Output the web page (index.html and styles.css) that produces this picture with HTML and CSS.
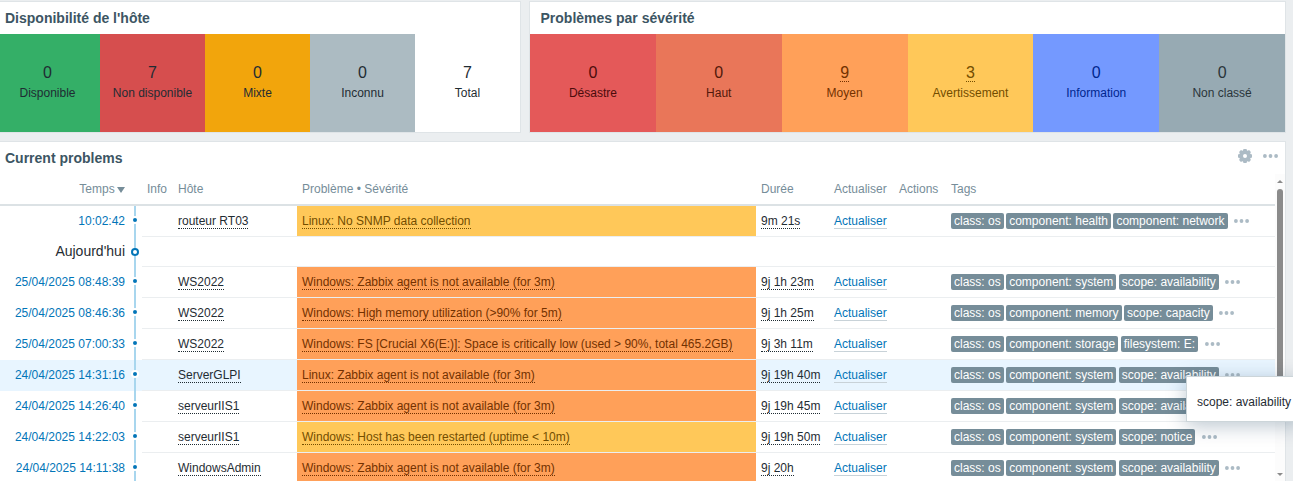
FILE: index.html
```html
<!DOCTYPE html>
<html lang="fr">
<head>
<meta charset="utf-8">
<title>Zabbix</title>
<link rel="stylesheet" href="styles.css">
</head>
<body>
<svg class="defs" aria-hidden="true">
  <symbol id="more" viewBox="0 0 15 4"><circle cx="1.9" cy="2" r="1.9"/><circle cx="7.5" cy="2" r="1.9"/><circle cx="13.1" cy="2" r="1.9"/></symbol>
</svg>
<main class="dashboard">
  <div class="top">
    <section class="widget">
      <h4 class="title">Disponibilité de l'hôte</h4>
      <div class="tiles hosts">
        <div class="tile available"><span class="count">0</span><span>Disponible</span></div>
        <div class="tile unavailable"><span class="count">7</span><span>Non disponible</span></div>
        <div class="tile mixed"><span class="count">0</span><span>Mixte</span></div>
        <div class="tile unknown"><span class="count">0</span><span>Inconnu</span></div>
        <div class="tile"><span class="count">7</span><span>Total</span></div>
      </div>
    </section>
    <section class="widget severity">
      <h4 class="title">Problèmes par sévérité</h4>
      <div class="tiles">
        <div class="tile disaster"><span class="count">0</span><span>Désastre</span></div>
        <div class="tile high"><span class="count">0</span><span>Haut</span></div>
        <div class="tile average"><span class="count"><a class="hint">9</a></span><span>Moyen</span></div>
        <div class="tile warning"><span class="count"><a class="hint">3</a></span><span>Avertissement</span></div>
        <div class="tile information"><span class="count">0</span><span>Information</span></div>
        <div class="tile unclassified"><span class="count">0</span><span>Non classé</span></div>
      </div>
    </section>
  </div>
  <section class="widget problems">
    <header class="bar">
      <h4 class="title">Current problems</h4>
      <svg class="gear" viewBox="0 0 14 14"><path fill-rule="evenodd" d="M5.500 0h3l.5 1.500.6.300 1.500-.7 1.800 1.800-.7 1.500.3.600 1.500.5v3l-1.500.5-.3.600.7 1.500-1.800 1.800-1.500-.7-.6.300-.5 1.500h-3l-.5-1.500-.6-.3-1.500.7-1.800-1.800.7-1.500-.3-.6L0 8.500v-3L1.500 5l.3-.6-.7-1.500 1.800-1.800 1.500.7.600-.3zM7 5a2 2 0 1 0 0 4 2 2 0 0 0 0-4z"/></svg>
      <svg class="more"><use href="#more"/></svg>
    </header>
    <div class="body">
      <div class="table">
        <div class="row head">
          <span class="time">Temps <i class="sort"></i></span><span>Info</span><span>Hôte</span><span>Problème • Sévérité</span><span>Durée</span><span>Actualiser</span><span>Actions</span><span>Tags</span>
        </div>
        <div class="row">
          <div class="time">10:02:42</div><div></div><div><a class="hint">routeur RT03</a></div><div class="warning"><a class="hint">Linux: No SNMP data collection</a></div><div><a class="hint">9m 21s</a></div><div><a class="update">Actualiser</a></div><div></div>
          <div class="tags"><span class="tag">class: os</span><span class="tag">component: health</span><span class="tag">component: network</span><svg class="more"><use href="#more"/></svg></div>
        </div>
        <div class="row today"><div class="time">Aujourd'hui</div><div class="rest"></div></div>
        <div class="row">
          <div class="time">25/04/2025 08:48:39</div><div></div><div><a class="hint">WS2022</a></div><div class="average"><a class="hint">Windows: Zabbix agent is not available (for 3m)</a></div><div><a class="hint">9j 1h 23m</a></div><div><a class="update">Actualiser</a></div><div></div>
          <div class="tags"><span class="tag">class: os</span><span class="tag">component: system</span><span class="tag">scope: availability</span><svg class="more"><use href="#more"/></svg></div>
        </div>
        <div class="row">
          <div class="time">25/04/2025 08:46:36</div><div></div><div><a class="hint">WS2022</a></div><div class="average"><a class="hint">Windows: High memory utilization (&gt;90% for 5m)</a></div><div><a class="hint">9j 1h 25m</a></div><div><a class="update">Actualiser</a></div><div></div>
          <div class="tags"><span class="tag">class: os</span><span class="tag">component: memory</span><span class="tag">scope: capacity</span><svg class="more"><use href="#more"/></svg></div>
        </div>
        <div class="row">
          <div class="time">25/04/2025 07:00:33</div><div></div><div><a class="hint">WS2022</a></div><div class="average"><a class="hint">Windows: FS [Crucial X6(E:)]: Space is critically low (used &gt; 90%, total 465.2GB)</a></div><div><a class="hint">9j 3h 11m</a></div><div><a class="update">Actualiser</a></div><div></div>
          <div class="tags"><span class="tag">class: os</span><span class="tag">component: storage</span><span class="tag">filesystem: E:</span><svg class="more"><use href="#more"/></svg></div>
        </div>
        <div class="row hovered">
          <div class="time">24/04/2025 14:31:16</div><div></div><div><a class="hint">ServerGLPI</a></div><div class="average"><a class="hint">Linux: Zabbix agent is not available (for 3m)</a></div><div><a class="hint">9j 19h 40m</a></div><div><a class="update">Actualiser</a></div><div></div>
          <div class="tags"><span class="tag">class: os</span><span class="tag">component: system</span><span class="tag">scope: availability</span><svg class="more"><use href="#more"/></svg></div>
        </div>
        <div class="row">
          <div class="time">24/04/2025 14:26:40</div><div></div><div><a class="hint">serveurIIS1</a></div><div class="average"><a class="hint">Windows: Zabbix agent is not available (for 3m)</a></div><div><a class="hint">9j 19h 45m</a></div><div><a class="update">Actualiser</a></div><div></div>
          <div class="tags"><span class="tag">class: os</span><span class="tag">component: system</span><span class="tag">scope: availability</span><svg class="more"><use href="#more"/></svg></div>
        </div>
        <div class="row">
          <div class="time">24/04/2025 14:22:03</div><div></div><div><a class="hint">serveurIIS1</a></div><div class="warning"><a class="hint">Windows: Host has been restarted (uptime &lt; 10m)</a></div><div><a class="hint">9j 19h 50m</a></div><div><a class="update">Actualiser</a></div><div></div>
          <div class="tags"><span class="tag">class: os</span><span class="tag">component: system</span><span class="tag">scope: notice</span><svg class="more"><use href="#more"/></svg></div>
        </div>
        <div class="row">
          <div class="time">24/04/2025 14:11:38</div><div></div><div><a class="hint">WindowsAdmin</a></div><div class="average"><a class="hint">Windows: Zabbix agent is not available (for 3m)</a></div><div><a class="hint">9j 20h</a></div><div><a class="update">Actualiser</a></div><div></div>
          <div class="tags"><span class="tag">class: os</span><span class="tag">component: system</span><span class="tag">scope: availability</span><svg class="more"><use href="#more"/></svg></div>
        </div>
      </div>
      <div class="scrollbar"><i class="up"></i><i class="thumb"></i><i class="down"></i></div>
    </div>
  </section>
</main>
<div class="tooltip">scope: availability</div>
</body>
</html>
```

FILE: styles.css
```css
*, *::after { box-sizing: border-box; }
body {
  margin: 0;
  height: 481px;
  overflow: hidden;
  background: #ebeef0;
  color: #1f2c33;
  font: 12px/14px "Liberation Sans", Arial, sans-serif;
}
.defs { display: none; }
.dashboard {
  display: flex;
  flex-direction: column;
  gap: 8px;
  width: 1292px;
  margin: 1px 0 0 -6px;
}
.top { display: grid; grid-template-columns: 527px 757px; gap: 8px; }
.widget { background: #fff; border: 1px solid #dfe4e7; }
.title {
  margin: 0;
  height: 32px;
  padding: 0 10px;
  color: #3c5563;
  font-size: 14px;
  line-height: 32px;
}
.severity .title { padding-left: 10.5px; }

/* Count tiles */
.tiles { display: grid; grid-template-columns: repeat(6, 1fr); height: 98px; }
.hosts { grid-template-columns: repeat(5, 1fr); }
.tile {
  display: flex;
  flex-direction: column;
  align-items: center;
  gap: 4px;
  padding-top: 30px;
}
.count { height: 18px; font-size: 16px; line-height: 18px; }
.count .hint { display: inline-block; height: 18px; }
.available { background: #34af67; }
.unavailable { background: #d64e4e; }
.mixed { background: #f2a50c; }
.unknown { background: #acbbc2; }
.disaster { background: #e45959; color: #4b0c0c; }
.high { background: #e97659; color: #52190b; }
.average { background: #ffa059; color: #733100; }
.warning { background: #ffc859; color: #734d00; }
.information { background: #7499ff; color: #00268e; }
.unclassified { background: #97aab3; color: #2a353a; }

/* Problems widget */
.problems { height: 350px; }
.bar { display: flex; align-items: center; height: 32px; padding-right: 7px; fill: #acbbc5; }
.bar .title { flex: 1; }
.gear { width: 14px; height: 14px; margin: -4px 11px 0 0; }
.more { width: 15px; height: 4px; fill: #acbbc5; }
.bar .more { margin-top: -5px; }
.body { display: flex; }
.table { width: 1280px; }
.row {
  display: grid;
  grid-template-columns: 147px 31px 124px 459px 73px 65px 52px 1fr;
  height: 31px;
}
.row > * { padding: 8px 5px 0; border-bottom: 1px solid #ebeef0; white-space: nowrap; }
.head { height: 32px; border-bottom: 2px solid #dce2e5; color: #768d99; }
.head > * { border-bottom: 0; }
.row > .time { padding-right: 17px; border-bottom: 0; text-align: right; color: #0275b8; }
.head > .time { color: #768d99; }
.sort {
  display: inline-block;
  margin-left: -1px;
  border: 4px solid transparent;
  border-top: 6px solid #768d99;
  border-bottom: 0;
}
.row:not(.head) > .time {
  position: relative;
  background: linear-gradient(#a8d6ee, #a8d6ee) 139px 0 / 2px 100% no-repeat;
}
.row:not(.head) > .time::after {
  content: "";
  position: absolute;
  top: 10px;
  left: 136px;
  width: 8px;
  height: 8px;
  border: 2px solid #fff;
  border-radius: 50%;
  background: #0275b8;
}
.today { grid-template-columns: 147px 1fr; height: 30px; }
.row.today > .time { padding-top: 6px; font-size: 14px; line-height: 16px; color: #1f2c33; }
.row.today > .time::after { top: 11px; background: #fff; border-color: #0275b8; }
.hovered { background: #e8f5ff; }
.hint { border-bottom: 1px dotted; }
.update { color: #0275b8; border-bottom: 1px solid #c8d2d8; }
.row > .tags { display: flex; align-items: flex-start; gap: 2.5px; padding-top: 7px; }
.tag { padding: 1px 3px; border-radius: 2px; background: #768d99; color: #fff; }
.tags .more { margin: 6px 0 0 4px; }

/* Scrollbar */
.scrollbar {
  display: flex;
  flex-direction: column;
  align-items: center;
  width: 10px;
  height: 307px;
  padding: 6px 0 5px;
  background: #fcfcfc;
}
.up, .down { border: 3px solid transparent; }
.up { border-top: 0; border-bottom-color: #8b8b8b; }
.down { margin-top: auto; border-bottom: 0; border-top-color: #8b8b8b; }
.thumb { width: 6px; height: 212px; margin-top: 6px; border-radius: 3px; background: #8b8b8b; }

.tooltip {
  position: absolute;
  top: 376px;
  left: 1186px;
  width: 115px;
  height: 46px;
  padding: 18px 10px 0;
  border: 1px solid #ccd5d9;
  background: #fff;
  box-shadow: 0 4px 20px rgba(0, 43, 76, .27);
  white-space: nowrap;
}
```
